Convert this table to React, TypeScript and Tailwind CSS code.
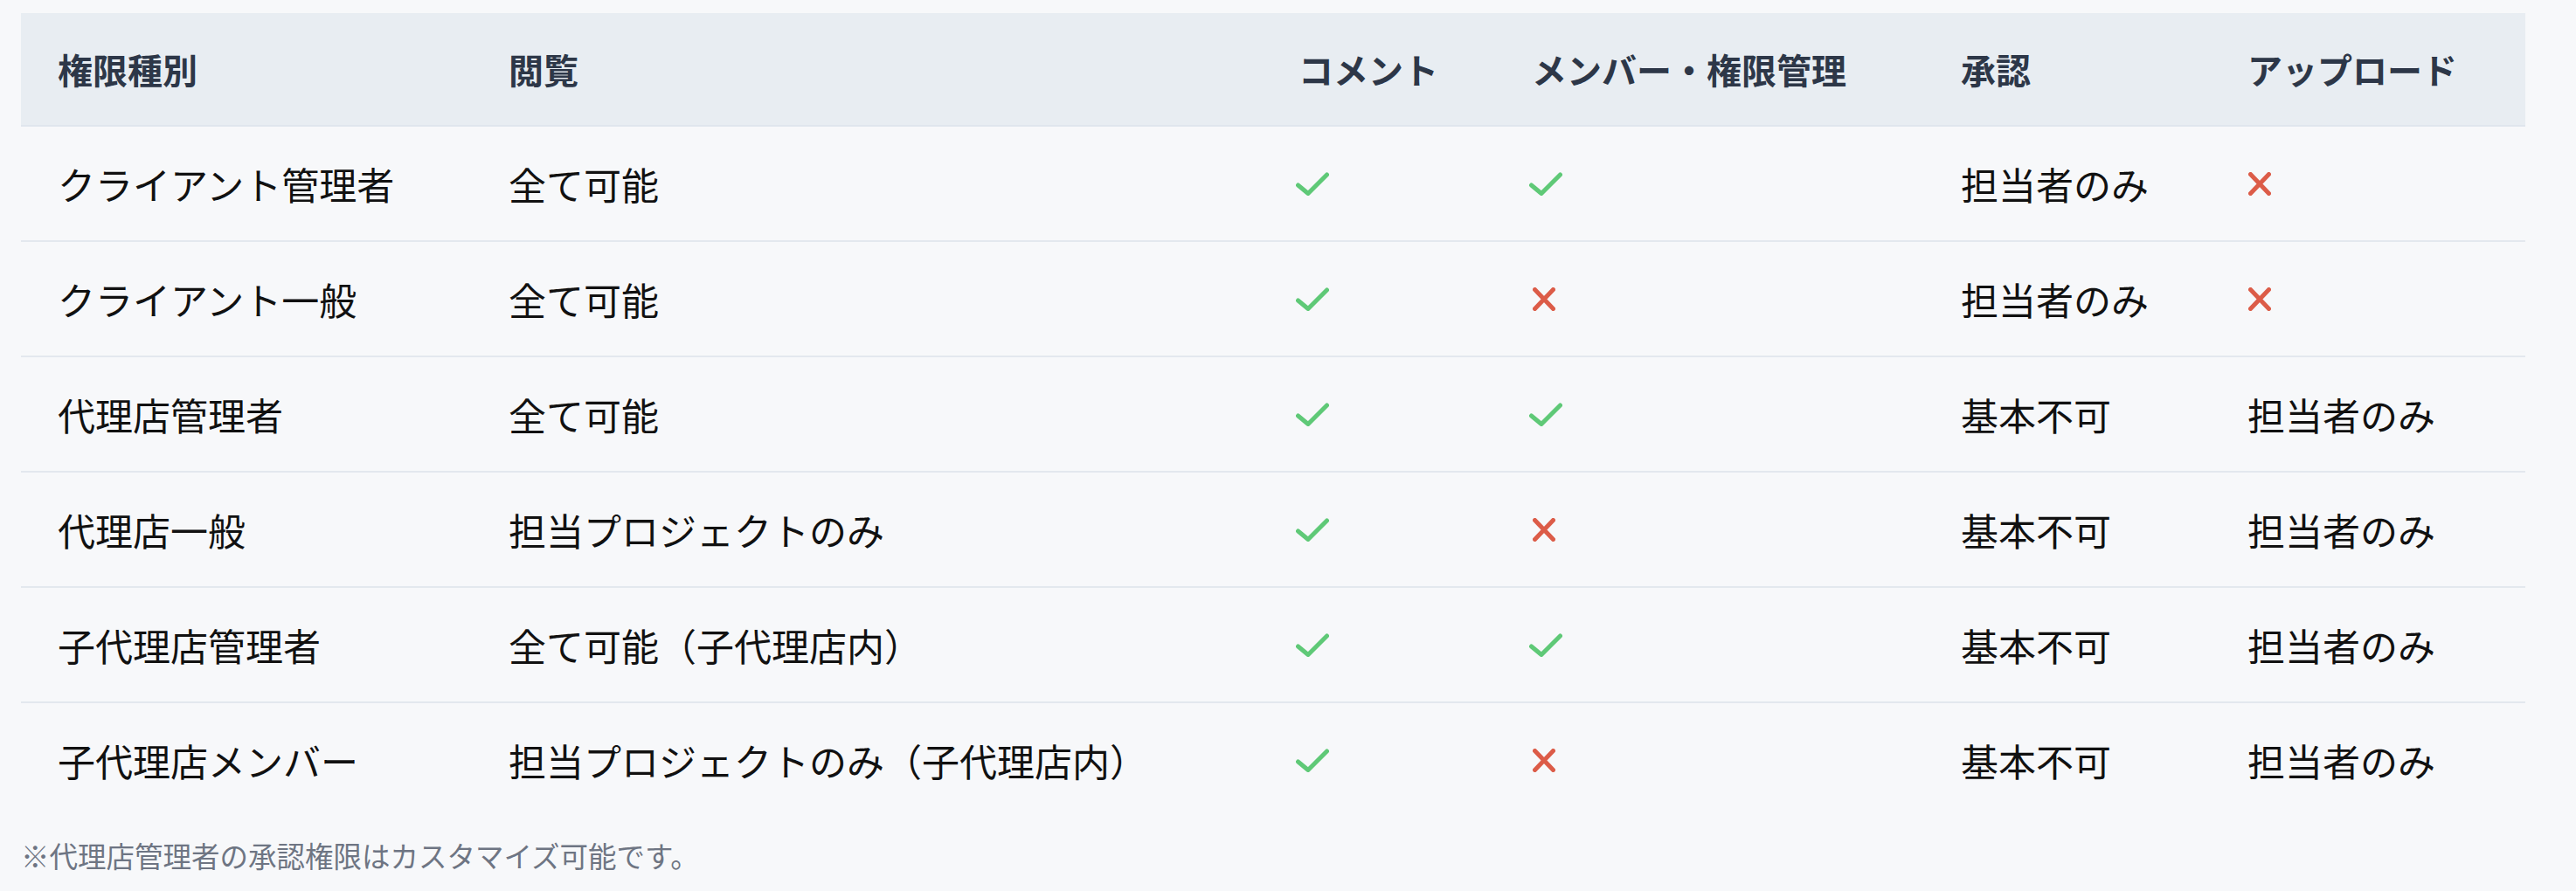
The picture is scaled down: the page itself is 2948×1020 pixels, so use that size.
import React from "react";

type Cell = string | boolean;

const COLUMNS = ["権限種別", "閲覧", "コメント", "メンバー・権限管理", "承認", "アップロード"];

const ROWS: Cell[][] = [
  ["クライアント管理者", "全て可能", true, true, "担当者のみ", false],
  ["クライアント一般", "全て可能", true, false, "担当者のみ", false],
  ["代理店管理者", "全て可能", true, true, "基本不可", "担当者のみ"],
  ["代理店一般", "担当プロジェクトのみ", true, false, "基本不可", "担当者のみ"],
  ["子代理店管理者", "全て可能（子代理店内）", true, true, "基本不可", "担当者のみ"],
  ["子代理店メンバー", "担当プロジェクトのみ（子代理店内）", true, false, "基本不可", "担当者のみ"],
];

const GRID = "grid grid-cols-[516px_904px_267px_491px_328px_360px]";

const CheckIcon = () => (
  <svg width="38" height="27" viewBox="0 0 38 27" fill="none" className="-ml-[3px]">
    <path
      d="M2.5 15 14 24.5 35.5 3"
      stroke="#5fc977"
      strokeWidth="5"
      strokeLinecap="round"
      strokeLinejoin="round"
    />
  </svg>
);

const CrossIcon = () => (
  <svg width="26" height="27" viewBox="0 0 26 27" fill="none" className="ml-[1px]">
    <path
      d="M2.5 2.5 23.5 24.5M23.5 2.5 2.5 24.5"
      stroke="#dc5c48"
      strokeWidth="5"
      strokeLinecap="round"
    />
  </svg>
);

const renderCell = (value: Cell) => {
  if (value === true) return <CheckIcon />;
  if (value === false) return <CrossIcon />;
  return <span>{value}</span>;
};

export default function App() {
  return (
    <div className="min-h-screen w-full bg-[#f7f8fa] pt-[15px] pl-[24px] font-['Noto_Sans_CJK_JP','Noto_Sans',sans-serif]">
      <div className="w-[2866px]">
        {/* header */}
        <div className={`${GRID} h-[130px] bg-[#e8edf2] border-b-2 border-[#e0e6ed]`}>
          {COLUMNS.map((col) => (
            <div
              key={col}
              className="flex items-center pl-[42px] text-[40px] leading-none font-bold text-[#2d3748]"
            >
              {col}
            </div>
          ))}
        </div>

        {/* body */}
        {ROWS.map((row, i) => (
          <div
            key={i}
            className={`${GRID} ${
              i < ROWS.length - 1 ? "h-[132px] border-b-2 border-[#e3e8ee]" : "h-[130px]"
            }`}
          >
            {row.map((value, j) => (
              <div
                key={j}
                className="flex items-center pl-[42px] text-[43px] leading-none text-[#111111] whitespace-nowrap"
              >
                {renderCell(value)}
              </div>
            ))}
          </div>
        ))}
      </div>

      <p className="mt-[21px] text-[32.5px] leading-[46px] text-[#6e7583]">
        ※代理店管理者の承認権限はカスタマイズ可能です。
      </p>
    </div>
  );
}
